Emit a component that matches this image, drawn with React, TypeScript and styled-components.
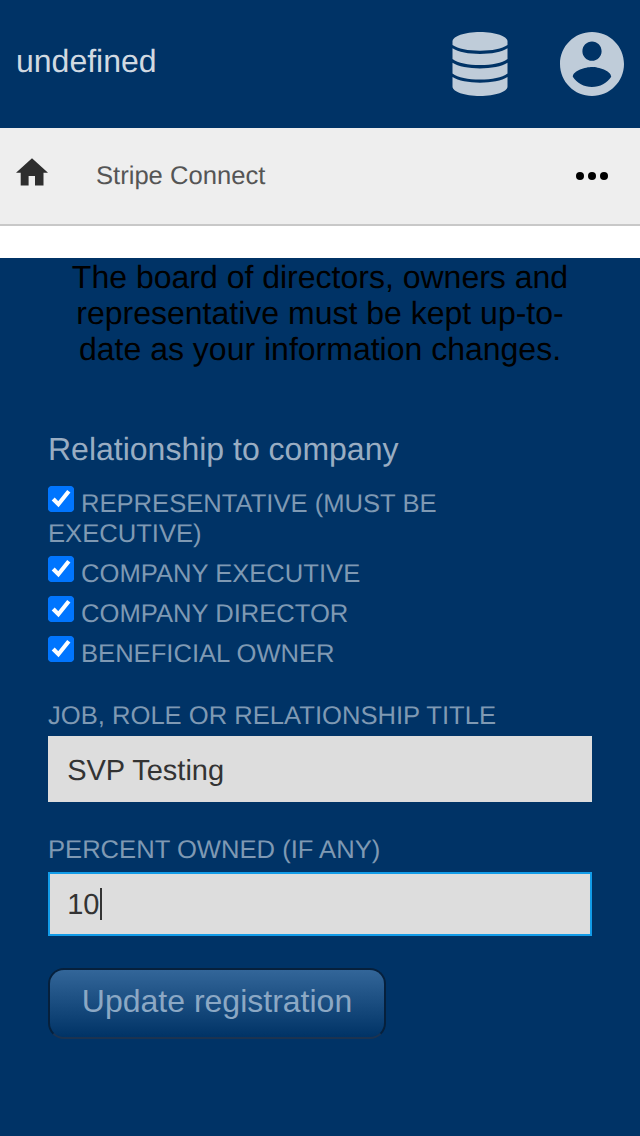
import React from "react";
import styled, { createGlobalStyle } from "styled-components";

const GlobalStyle = createGlobalStyle`
  * { box-sizing: border-box; }
  html, body { margin: 0; background: #fff; }
  body {
    font-family: "Liberation Sans", Arial, sans-serif;
    text-rendering: geometricPrecision;
  }
`;

const Page = styled.div`
  width: 640px;
  height: 1136px;
  display: flex;
  flex-direction: column;
  overflow: hidden;
`;

const Header = styled.header`
  height: 128px;
  flex: none;
  display: flex;
  justify-content: space-between;
  padding: 32px 16px;
  background: #003366;
  color: #d1d9e1;
`;

const Brand = styled.div`
  font-size: 32px;
  line-height: 36px;
  padding-top: 11px;
`;

const HeaderIcons = styled.div`
  display: flex;
  gap: 52px;
  color: #bfccd9;
  svg { display: block; }
`;

const NavBar = styled.nav`
  height: 98px;
  flex: none;
  display: flex;
  align-items: flex-start;
  padding: 30px 32px 0 16px;
  background: #eee;
  border-bottom: 2px solid #c8c8c8;
`;

const NavTitle = styled.div`
  flex: 1;
  margin-left: 48px;
  padding-top: 3px;
  font-size: 25.6px;
  line-height: 30px;
  color: #555;
`;

const HomeIcon = styled.svg`
  display: block;
`;

const Dots = styled.svg`
  display: block;
  margin-top: 14px;
`;

const Main = styled.main`
  flex: 1;
  margin-top: 32px;
  padding: 1px 48px 0;
  background: #003366;
`;

const Notice = styled.p`
  margin: 0;
  font-size: 32px;
  line-height: 36px;
  text-align: center;
  color: #000;
`;

const GroupTitle = styled.h2`
  margin: 64px 0 22px;
  font-size: 32px;
  line-height: 36px;
  font-weight: 400;
  color: #99adc2;
`;

const labelText = `
  font-size: 25.6px;
  line-height: 30px;
  text-transform: uppercase;
  color: #7f99b3;
`;

const CheckLabel = styled.label`
  display: block;
  ${labelText}
  margin-top: 10px;
  &:first-of-type { margin-top: 0; }
`;

const Checkbox = styled.input`
  zoom: 2;
  width: 13px;
  height: 13px;
  margin: -2px 3.5px 0 0;
  vertical-align: 0;
  accent-color: #0075ff;
`;

const CheckGroup = styled.div`
  margin-top: 0;
`;

const Field = styled.div<{ $top: number }>`
  margin-top: ${(p) => p.$top}px;
`;

const FieldLabel = styled.label`
  display: block;
  ${labelText}
`;

const TextField = styled.div<{ $focused?: boolean }>`
  display: flex;
  align-items: center;
  height: ${(p) => (p.$focused ? 64 : 66)}px;
  margin-top: ${(p) => (p.$focused ? 7 : 5)}px;
  padding: 0 ${(p) => (p.$focused ? 17.2 : 19.2)}px;
  border: ${(p) => (p.$focused ? "2px solid #129ce8" : "0")};
  background: #ddd;
  color: #333;
  font-size: 29px;
  line-height: 32px;
`;

const FieldValue = styled.span<{ $drop: number }>`
  padding-top: ${(p) => p.$drop}px;
`;

const Caret = styled.span`
  width: 2px;
  height: 32px;
  margin-left: 0.6px;
  background: #333;
`;

const SubmitButton = styled.button`
  display: block;
  width: 338px;
  height: 71px;
  margin: 32px 0 0;
  padding: 0 0 5px;
  border: 2px solid #06203c;
  border-bottom-color: #1c3350;
  border-radius: 16px;
  background: linear-gradient(#336699, #003366);
  color: #8ca8c4;
  font: 32px/36px "Liberation Sans", Arial, sans-serif;
`;

const roles = [
  "Representative (must be executive)",
  "Company executive",
  "Company director",
  "Beneficial owner",
];

const DatabaseIcon = () => (
  <svg width="56" height="64" viewBox="0 0 56 64" fill="currentColor">
    <path d="M0.500 9.500C0.500 4.300 12.500 0 28 0s27.500 4.300 27.500 9.500V13C50 16.800 40 18.700 28 18.700S6 16.800 0.500 13z" />
    <path d="M0.500 16.300C6 20 17 22 28 22s22-2 27.500-5.700V27C50 31 40 33 28 33S6 31 0.500 27z" />
    <path d="M0.500 30.700C6 34.400 17 36.400 28 36.400s22-2 27.500-5.700v10.700C50 45.400 40 47.400 28 47.400S6 45.400 0.500 41.400z" />
    <path d="M0.500 45C6 48.700 17 50.700 28 50.700s22-2 27.500-5.700v9.500C55.500 59.700 43.500 64 28 64S0.500 59.700 0.500 54.500z" />
  </svg>
);

const AccountIcon = () => (
  <svg width="64" height="64" viewBox="2 2 20 20" fill="currentColor">
    <path d="M12 2C6.480 2 2 6.480 2 12s4.480 10 10 10 10-4.480 10-10S17.520 2 12 2zm0 3c1.660 0 3 1.340 3 3s-1.340 3-3 3-3-1.340-3-3 1.340-3 3-3zm0 14.200c-2.500 0-4.710-1.280-6-3.220.030-1.990 4-3.080 6-3.080 1.990 0 5.970 1.090 6 3.080-1.290 1.940-3.500 3.220-6 3.220z" />
  </svg>
);

export default function App() {
  return (
    <>
      <GlobalStyle />
      <Page>
        <Header>
          <Brand>undefined</Brand>
          <HeaderIcons>
            <DatabaseIcon />
            <AccountIcon />
          </HeaderIcons>
        </Header>
        <NavBar>
          <HomeIcon width="32" height="28" viewBox="0 0 32 28" fill="#2e2e2e">
            <path d="M16 0.300L32 14.700h-4.500v12.900H19V18h-6.400v9.600H4.700V14.700H0z" />
          </HomeIcon>
          <NavTitle>Stripe Connect</NavTitle>
          <Dots width="32" height="8" viewBox="0 0 32 8">
            <circle cx="4" cy="4" r="4" />
            <circle cx="16" cy="4" r="4" />
            <circle cx="28" cy="4" r="4" />
          </Dots>
        </NavBar>
        <Main>
          <Notice>
            The board of directors, owners and
            <br />
            representative must be kept up-to-
            <br />
            date as your information changes.
          </Notice>
          <GroupTitle>Relationship to company</GroupTitle>
          <CheckGroup>
            {roles.map((role) => (
              <CheckLabel key={role}>
                <Checkbox type="checkbox" defaultChecked />
                {role}
              </CheckLabel>
            ))}
          </CheckGroup>
          <Field $top={32}>
            <FieldLabel>Job, role or relationship title</FieldLabel>
            <TextField>
              <FieldValue $drop={4}>SVP Testing</FieldValue>
            </TextField>
          </Field>
          <Field $top={33}>
            <FieldLabel>Percent owned (if any)</FieldLabel>
            <TextField $focused>
              <FieldValue $drop={2}>10</FieldValue>
              <Caret />
            </TextField>
          </Field>
          <SubmitButton type="button">Update registration</SubmitButton>
        </Main>
      </Page>
    </>
  );
}
